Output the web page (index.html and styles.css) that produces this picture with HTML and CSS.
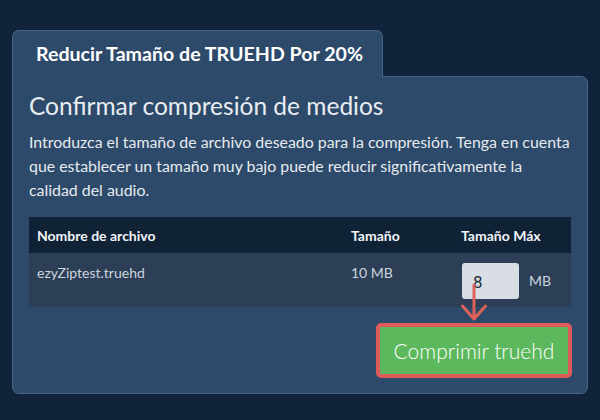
FILE: index.html
```html
<!DOCTYPE html>
<html lang="es">
<head>
<meta charset="utf-8">
<title>Reducir Tamaño de TRUEHD</title>
<link rel="stylesheet" href="styles.css">
</head>
<body>
<div class="wrap">
  <div class="tab">Reducir Tamaño de TRUEHD Por 20%</div>
  <div class="panel">
    <h1 class="title">Confirmar compresión de medios</h1>
    <p class="desc">Introduzca el tamaño de archivo deseado para la compresión. Tenga en cuenta que establecer un tamaño muy bajo puede reducir significativamente la calidad del audio.</p>
    <div class="table">
      <div class="row head">
        <div class="cell">Nombre de archivo</div>
        <div class="cell">Tamaño</div>
        <div class="cell">Tamaño Máx</div>
      </div>
      <div class="row body">
        <div class="cell">ezyZiptest.truehd</div>
        <div class="cell">10 MB</div>
        <div class="cell max">
          <div class="input-box">
            <input class="size-input" type="text" value="8">
            <svg class="arrow" width="26" height="38" viewBox="0 0 26 38">
              <path d="M13 1 L13 35 M1.5 22 L13 35 L24.5 22" fill="none" stroke="#e0605a" stroke-width="3" stroke-linecap="round" stroke-linejoin="round"/>
            </svg>
          </div>
          <span class="unit">MB</span>
        </div>
      </div>
    </div>
    <div class="actions">
      <button class="compress">Comprimir truehd</button>
    </div>
  </div>
</div>
</body>
</html>
```

FILE: styles.css
```css
html, body {
  margin: 0;
  padding: 0;
  background: #11233a;
}
body {
  font-family: Lato, "Open Sans", sans-serif;
  color: #e9edf2;
}
.wrap {
  padding: 30px 12px 0 12px;
}
.tab {
  position: relative;
  z-index: 1;
  box-sizing: border-box;
  width: 371px;
  height: 47px;
  margin-bottom: -1px;
  padding: 0 0 0 23px;
  background: #2d4a6a;
  border: 1px solid #4a6587;
  border-bottom: none;
  border-radius: 7px 7px 0 0;
  font-weight: 700;
  font-size: 19.6px;
  line-height: 46px;
  color: #ffffff;
}
.panel {
  box-sizing: border-box;
  width: 576px;
  background: #2d4a6a;
  border: 1px solid #4a6587;
  border-radius: 0 7px 7px 7px;
  padding: 14px 16px 15px 16px;
}
.title {
  margin: 0;
  font-weight: 400;
  font-size: 24.5px;
  line-height: 30px;
  color: #e9edf2;
}
.desc {
  margin: 9px 0 0 0;
  font-size: 15.9px;
  line-height: 24px;
  color: #e6eaef;
}
.table {
  margin-top: 15px;
}
.row {
  display: grid;
  grid-template-columns: 314px 110px 1fr;
  padding-left: 8px;
}
.row.head {
  background: #0f2236;
  height: 36px;
  align-items: center;
  font-weight: 700;
  font-size: 14px;
  color: #f2f4f7;
}
.row.body {
  background: #2c3f57;
  height: 54px;
  font-size: 14px;
  color: #cdd4dd;
  align-items: start;
}
.row.body .cell {
  padding-top: 10px;
  line-height: 20px;
}
.row.body .cell.max {
  display: flex;
  align-items: center;
  gap: 10px;
  padding-top: 10px;
}
.input-box {
  position: relative;
  width: 57px;
  height: 36px;
  margin-left: 1px;
}
.size-input {
  box-sizing: border-box;
  width: 57px;
  height: 36px;
  border: none;
  border-radius: 3px;
  background: #d9dde4;
  padding: 4px 0 0 11px;
  font-family: "DejaVu Sans", sans-serif;
  font-size: 15px;
  color: #1d2a38;
  outline: none;
}
.arrow {
  position: absolute;
  left: -1px;
  top: 21px;
}
.unit {
  font-size: 14px;
  color: #cdd4dd;
}
.actions {
  display: flex;
  justify-content: flex-end;
  margin-top: 16px;
  margin-right: -1px;
}
.compress {
  box-sizing: border-box;
  width: 196px;
  height: 55px;
  background: #5cb85c;
  border: 4px solid #dd5b58;
  border-radius: 5px;
  font-family: Lato, "Open Sans", sans-serif;
  font-size: 21px;
  font-weight: 300;
  color: #ffffff;
  padding: 0;
}
```
